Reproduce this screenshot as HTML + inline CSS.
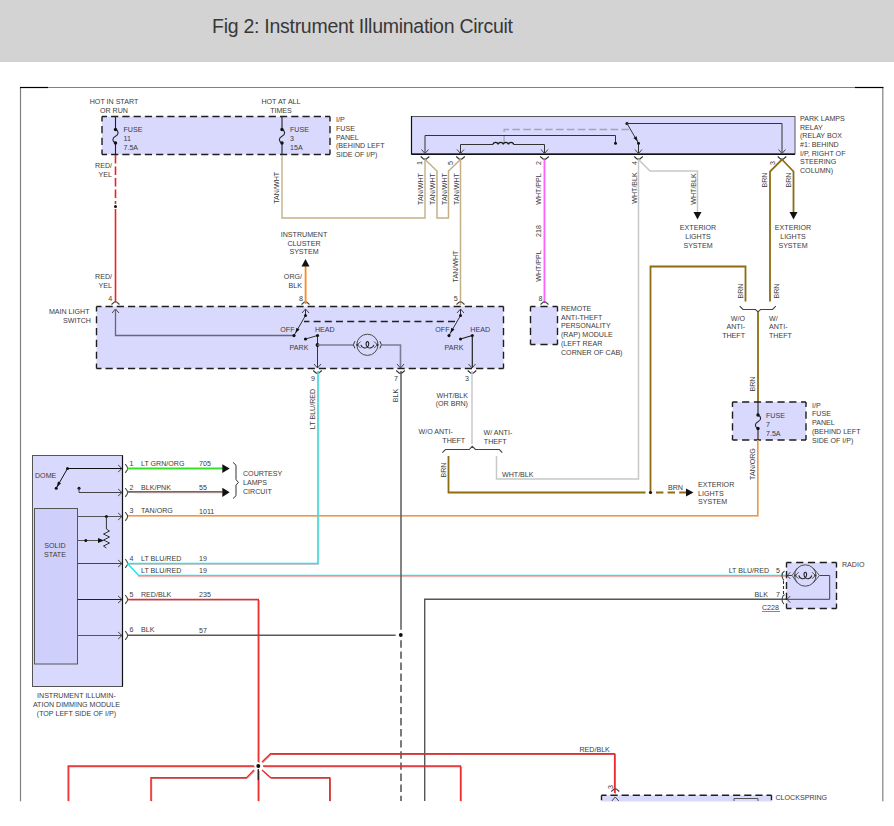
<!DOCTYPE html>
<html><head><meta charset="utf-8"><style>
html,body{margin:0;padding:0;background:#fff;}
body{width:894px;height:826px;overflow:hidden;position:relative;font-family:"Liberation Sans",sans-serif;}
.hdr{position:absolute;left:0;top:0;width:894px;height:62px;background:#d3d3d3;}
.title{position:absolute;left:212px;top:15px;font-size:19.5px;letter-spacing:-0.27px;line-height:22px;color:#383838;white-space:nowrap;}
svg{position:absolute;left:0;top:0;}
svg text{font-family:"Liberation Sans",sans-serif;}
</style></head><body>
<div class="hdr"></div><div class="title">Fig 2: Instrument Illumination Circuit</div>
<svg width="894" height="826" viewBox="0 0 894 826">
<path d="M20.5,801.5 V87.5 H882.8 V801.5" stroke="#808080" stroke-width="1.2" fill="none"/>
<path d="M20,87.5 H48" stroke="#000" stroke-width="1.2" fill="none"/>
<path d="M855,87.5 H883.4" stroke="#000" stroke-width="1.2" fill="none"/>
<rect x="102" y="116.5" width="228" height="38" fill="#d9d9fe"/>
<path d="M102.00,116.50 L107.00,116.50 M111.06,116.50 L118.26,116.50 M122.32,116.50 L129.52,116.50 M133.58,116.50 L140.78,116.50 M144.84,116.50 L152.04,116.50 M156.10,116.50 L163.30,116.50 M167.36,116.50 L174.56,116.50 M178.62,116.50 L185.82,116.50 M189.88,116.50 L197.08,116.50 M201.14,116.50 L208.34,116.50 M212.40,116.50 L219.60,116.50 M223.66,116.50 L230.86,116.50 M234.92,116.50 L242.12,116.50 M246.18,116.50 L253.38,116.50 M257.44,116.50 L264.64,116.50 M268.70,116.50 L275.90,116.50 M279.96,116.50 L287.16,116.50 M291.22,116.50 L298.42,116.50 M302.48,116.50 L309.68,116.50 M313.74,116.50 L320.94,116.50 M325.00,116.50 L330.00,116.50 M330.00,116.50 L330.00,121.50 M330.00,126.03 L330.00,133.23 M330.00,137.77 L330.00,144.97 M330.00,149.50 L330.00,154.50 M102.00,154.50 L107.00,154.50 M111.06,154.50 L118.26,154.50 M122.32,154.50 L129.52,154.50 M133.58,154.50 L140.78,154.50 M144.84,154.50 L152.04,154.50 M156.10,154.50 L163.30,154.50 M167.36,154.50 L174.56,154.50 M178.62,154.50 L185.82,154.50 M189.88,154.50 L197.08,154.50 M201.14,154.50 L208.34,154.50 M212.40,154.50 L219.60,154.50 M223.66,154.50 L230.86,154.50 M234.92,154.50 L242.12,154.50 M246.18,154.50 L253.38,154.50 M257.44,154.50 L264.64,154.50 M268.70,154.50 L275.90,154.50 M279.96,154.50 L287.16,154.50 M291.22,154.50 L298.42,154.50 M302.48,154.50 L309.68,154.50 M313.74,154.50 L320.94,154.50 M325.00,154.50 L330.00,154.50 M102.00,116.50 L102.00,121.50 M102.00,126.03 L102.00,133.23 M102.00,137.77 L102.00,144.97 M102.00,149.50 L102.00,154.50" stroke="#1e1e1e" stroke-width="1.4" fill="none" stroke-linecap="butt"/>
<path d="M115.5,116.5 V129.5 C119.0,131.0 119.0,134.5 115.5,136.25 C112.0,138.0 112.0,141.5 115.5,143.0 V154.5" stroke="#222" stroke-width="1.1" fill="none"/>
<circle cx="115.5" cy="129.5" r="1.7" fill="#111"/>
<circle cx="115.5" cy="143.0" r="1.7" fill="#111"/>
<path d="M282,116.5 V129.5 C285.5,131.0 285.5,134.5 282,136.25 C278.5,138.0 278.5,141.5 282,143.0 V154.5" stroke="#222" stroke-width="1.1" fill="none"/>
<circle cx="282" cy="129.5" r="1.7" fill="#111"/>
<circle cx="282" cy="143.0" r="1.7" fill="#111"/>
<text x="123.5" y="132.1" font-size="7.1" fill="#3c3c3c">FUSE</text>
<text x="123.5" y="141.1" font-size="7.1" fill="#3c3c3c">11</text>
<text x="123.5" y="150.1" font-size="7.1" fill="#3c3c3c">7.5A</text>
<text x="290" y="132.1" font-size="7.1" fill="#3c3c3c">FUSE</text>
<text x="290" y="141.1" font-size="7.1" fill="#3c3c3c">3</text>
<text x="290" y="150.1" font-size="7.1" fill="#3c3c3c">15A</text>
<text x="114" y="103.8" text-anchor="middle" font-size="7.1" fill="#3c3c3c">HOT IN START</text>
<text x="114" y="112.6" text-anchor="middle" font-size="7.1" fill="#3c3c3c">OR RUN</text>
<text x="281" y="103.8" text-anchor="middle" font-size="7.1" fill="#3c3c3c">HOT AT ALL</text>
<text x="281" y="112.6" text-anchor="middle" font-size="7.1" fill="#3c3c3c">TIMES</text>
<text x="336" y="122.1" font-size="7.1" fill="#3c3c3c">I/P</text>
<text x="336" y="130.8" font-size="7.1" fill="#3c3c3c">FUSE</text>
<text x="336" y="139.5" font-size="7.1" fill="#3c3c3c">PANEL</text>
<text x="336" y="148.2" font-size="7.1" fill="#3c3c3c">(BEHIND LEFT</text>
<text x="336" y="156.9" font-size="7.1" fill="#3c3c3c">SIDE OF I/P)</text>
<path d="M115.5,155 V204" stroke="#f02020" stroke-width="1.6" fill="none" stroke-dasharray="8.5,3"/>
<path d="M115.5,209 V302" stroke="#f02020" stroke-width="1.6" fill="none"/>
<circle cx="115.5" cy="206.5" r="1.5" fill="#111"/>
<text x="112" y="167.8" text-anchor="end" font-size="7.1" fill="#3c3c3c">RED/</text>
<text x="112" y="176.8" text-anchor="end" font-size="7.1" fill="#3c3c3c">YEL</text>
<text x="112" y="279.1" text-anchor="end" font-size="7.1" fill="#3c3c3c">RED/</text>
<text x="112" y="288.2" text-anchor="end" font-size="7.1" fill="#3c3c3c">YEL</text>
<rect x="411.5" y="116.5" width="383.5" height="37.5" fill="#d9d9fe" stroke="#555" stroke-width="1"/>
<path d="M411.5,154.2 H795" stroke="#111" stroke-width="1.5" fill="none"/>
<path d="M411.5,116 V154.5" stroke="#111" stroke-width="1.2" fill="none"/>
<path d="M504.1,143 V129.5 H631" stroke="#a4a4b4" stroke-width="1.3" fill="none" stroke-dasharray="7.5,3.4"/>
<path d="M425,153 V135.5 H615.5 V143.2" stroke="#333" stroke-width="1" fill="none"/>
<circle cx="615.5" cy="143.2" r="1.5" fill="#111"/>
<path d="M460.5,153 V144.5 H493" stroke="#333" stroke-width="1" fill="none"/>
<path d="M513.6,144.5 H544.5 V153" stroke="#333" stroke-width="1" fill="none"/>
<path d="M493,144.5 a2.6,2.4 0 0 1 5.15,0 a2.6,2.4 0 0 1 5.15,0 a2.6,2.4 0 0 1 5.15,0 a2.6,2.4 0 0 1 5.15,0" stroke="#1a1a1a" stroke-width="1.3" fill="none"/>
<circle cx="627" cy="123.5" r="1.6" fill="#111"/>
<path d="M627,123.5 H782 V153" stroke="#333" stroke-width="1" fill="none"/>
<path d="M627,123.5 L638.5,143.2 V153" stroke="#333" stroke-width="1" fill="none"/>
<path d="M637.6,141.2 L636.6,136.3 L633.4,138.1 Z" fill="#111"/>
<circle cx="638.5" cy="143.2" r="1.5" fill="#111"/>
<path d="M421.5,149.5 L425,153.5 L428.5,149.5" stroke="#444" stroke-width="1" fill="none"/>
<path d="M420.7,156.5 L423.8,159.1 H426.2 L429.3,156.5" stroke="#333" stroke-width="1.2" fill="none"/>
<path d="M457.0,149.5 L460.5,153.5 L464.0,149.5" stroke="#444" stroke-width="1" fill="none"/>
<path d="M456.2,156.5 L459.3,159.1 H461.7 L464.8,156.5" stroke="#333" stroke-width="1.2" fill="none"/>
<path d="M541.0,149.5 L544.5,153.5 L548.0,149.5" stroke="#444" stroke-width="1" fill="none"/>
<path d="M540.2,156.5 L543.3,159.1 H545.7 L548.8,156.5" stroke="#333" stroke-width="1.2" fill="none"/>
<path d="M635.0,149.5 L638.5,153.5 L642.0,149.5" stroke="#444" stroke-width="1" fill="none"/>
<path d="M634.2,156.5 L637.3,159.1 H639.7 L642.8,156.5" stroke="#333" stroke-width="1.2" fill="none"/>
<path d="M778.5,149.5 L782,153.5 L785.5,149.5" stroke="#444" stroke-width="1" fill="none"/>
<path d="M777.7,156.5 L780.8,159.1 H783.2 L786.3,156.5" stroke="#333" stroke-width="1.2" fill="none"/>
<text x="422.0" y="163" text-anchor="middle" transform="rotate(-90 422.0 163)" font-size="7.1" fill="#3c3c3c">1</text>
<text x="452.5" y="163" text-anchor="middle" transform="rotate(-90 452.5 163)" font-size="7.1" fill="#3c3c3c">5</text>
<text x="541.0" y="163" text-anchor="middle" transform="rotate(-90 541.0 163)" font-size="7.1" fill="#3c3c3c">2</text>
<text x="636.5" y="163" text-anchor="middle" transform="rotate(-90 636.5 163)" font-size="7.1" fill="#3c3c3c">4</text>
<text x="774.5" y="163" text-anchor="middle" transform="rotate(-90 774.5 163)" font-size="7.1" fill="#3c3c3c">3</text>
<text x="800" y="121.2" font-size="7.1" fill="#3c3c3c">PARK LAMPS</text>
<text x="800" y="129.8" font-size="7.1" fill="#3c3c3c">RELAY</text>
<text x="800" y="138.4" font-size="7.1" fill="#3c3c3c">(RELAY BOX</text>
<text x="800" y="147.0" font-size="7.1" fill="#3c3c3c">#1: BEHIND</text>
<text x="800" y="155.6" font-size="7.1" fill="#3c3c3c">I/P, RIGHT OF</text>
<text x="800" y="164.2" font-size="7.1" fill="#3c3c3c">STEERING</text>
<text x="800" y="172.8" font-size="7.1" fill="#3c3c3c">COLUMN)</text>
<path d="M282,155 V218 H425 V159.5" stroke="#c2b086" stroke-width="1.4" fill="none"/>
<path d="M425,159.5 L437,171 V218 H448.5 V171 L460.5,159.5 V305" stroke="#c2b086" stroke-width="1.5" fill="none"/>
<text x="278.9" y="187.8" text-anchor="middle" transform="rotate(-90 278.9 187.8)" font-size="7.1" fill="#3c3c3c">TAN/WHT</text>
<text x="422.5" y="189" text-anchor="middle" transform="rotate(-90 422.5 189)" font-size="7.1" fill="#3c3c3c">TAN/WHT</text>
<text x="434.5" y="189" text-anchor="middle" transform="rotate(-90 434.5 189)" font-size="7.1" fill="#3c3c3c">TAN/WHT</text>
<text x="446.5" y="189" text-anchor="middle" transform="rotate(-90 446.5 189)" font-size="7.1" fill="#3c3c3c">TAN/WHT</text>
<text x="458.5" y="189" text-anchor="middle" transform="rotate(-90 458.5 189)" font-size="7.1" fill="#3c3c3c">TAN/WHT</text>
<text x="457.5" y="266.5" text-anchor="middle" transform="rotate(-90 457.5 266.5)" font-size="7.1" fill="#3c3c3c">TAN/WHT</text>
<path d="M543.7,159.5 V303" stroke="#c8b0d8" stroke-width="0.8" fill="none"/>
<path d="M544.7,159.5 V303" stroke="#ff5cff" stroke-width="1.3" fill="none"/>
<text x="541.0" y="189" text-anchor="middle" transform="rotate(-90 541.0 189)" font-size="7.1" fill="#3c3c3c">WHT/PPL</text>
<text x="541.0" y="231" text-anchor="middle" transform="rotate(-90 541.0 231)" font-size="7.1" fill="#3c3c3c">218</text>
<text x="541.0" y="266" text-anchor="middle" transform="rotate(-90 541.0 266)" font-size="7.1" fill="#3c3c3c">WHT/PPL</text>
<text x="538.5" y="300.5" font-size="7.1" fill="#3c3c3c">8</text>
<rect x="530.5" y="306.5" width="27" height="38" fill="#d9d9fe"/>
<path d="M530.50,306.50 L535.50,306.50 M540.40,306.50 L547.60,306.50 M552.50,306.50 L557.50,306.50 M557.50,306.50 L557.50,311.50 M557.50,316.03 L557.50,323.23 M557.50,327.77 L557.50,334.97 M557.50,339.50 L557.50,344.50 M530.50,344.50 L535.50,344.50 M540.40,344.50 L547.60,344.50 M552.50,344.50 L557.50,344.50 M530.50,306.50 L530.50,311.50 M530.50,316.03 L530.50,323.23 M530.50,327.77 L530.50,334.97 M530.50,339.50 L530.50,344.50" stroke="#1e1e1e" stroke-width="1.4" fill="none" stroke-linecap="butt"/>
<path d="M540.5,304.5 L543.3,302 H545.7 L548.5,304.5" stroke="#444" stroke-width="1.1" fill="none"/>
<text x="561" y="310.8" font-size="7.1" fill="#3c3c3c">REMOTE</text>
<text x="561" y="319.6" font-size="7.1" fill="#3c3c3c">ANTI-THEFT</text>
<text x="561" y="328.4" font-size="7.1" fill="#3c3c3c">PERSONALITY</text>
<text x="561" y="337.2" font-size="7.1" fill="#3c3c3c">(RAP) MODULE</text>
<text x="561" y="346.0" font-size="7.1" fill="#3c3c3c">(LEFT REAR</text>
<text x="561" y="354.8" font-size="7.1" fill="#3c3c3c">CORNER OF CAB)</text>
<path d="M638.5,159.5 V479 H496.5 V456" stroke="#c8c8c8" stroke-width="1.5" fill="none"/>
<path d="M638.5,159.5 L650,171 H697.5 V212" stroke="#c8c8c8" stroke-width="1.5" fill="none"/>
<path d="M693.5,212 L701.5,212 L697.5,219.5 Z" fill="#111"/>
<text x="636.5" y="188" text-anchor="middle" transform="rotate(-90 636.5 188)" font-size="7.1" fill="#3c3c3c">WHT/BLK</text>
<text x="695.5" y="189" text-anchor="middle" transform="rotate(-90 695.5 189)" font-size="7.1" fill="#3c3c3c">WHT/BLK</text>
<text x="698" y="230.0" text-anchor="middle" font-size="7.1" fill="#3c3c3c">EXTERIOR</text>
<text x="698" y="238.8" text-anchor="middle" font-size="7.1" fill="#3c3c3c">LIGHTS</text>
<text x="698" y="247.6" text-anchor="middle" font-size="7.1" fill="#3c3c3c">SYSTEM</text>
<path d="M782,159.5 L770,171.5 V301.5" stroke="#8f6c12" stroke-width="1.8" fill="none"/>
<path d="M782,159.5 L793.5,171.5 V212" stroke="#8f6c12" stroke-width="1.8" fill="none"/>
<path d="M789.5,212 L797.5,212 L793.5,219.5 Z" fill="#111"/>
<text x="766.5" y="180" text-anchor="middle" transform="rotate(-90 766.5 180)" font-size="7.1" fill="#3c3c3c">BRN</text>
<text x="790.5" y="180" text-anchor="middle" transform="rotate(-90 790.5 180)" font-size="7.1" fill="#3c3c3c">BRN</text>
<text x="793" y="230.0" text-anchor="middle" font-size="7.1" fill="#3c3c3c">EXTERIOR</text>
<text x="793" y="238.8" text-anchor="middle" font-size="7.1" fill="#3c3c3c">LIGHTS</text>
<text x="793" y="247.6" text-anchor="middle" font-size="7.1" fill="#3c3c3c">SYSTEM</text>
<rect x="96.5" y="306.5" width="407" height="62" fill="#d9d9fe"/>
<path d="M96.50,306.50 L101.50,306.50 M105.53,306.50 L112.73,306.50 M116.76,306.50 L123.96,306.50 M127.98,306.50 L135.18,306.50 M139.21,306.50 L146.41,306.50 M150.44,306.50 L157.64,306.50 M161.67,306.50 L168.87,306.50 M172.89,306.50 L180.09,306.50 M184.12,306.50 L191.32,306.50 M195.35,306.50 L202.55,306.50 M206.58,306.50 L213.78,306.50 M217.81,306.50 L225.01,306.50 M229.03,306.50 L236.23,306.50 M240.26,306.50 L247.46,306.50 M251.49,306.50 L258.69,306.50 M262.72,306.50 L269.92,306.50 M273.94,306.50 L281.14,306.50 M285.17,306.50 L292.37,306.50 M296.40,306.50 L303.60,306.50 M307.63,306.50 L314.83,306.50 M318.86,306.50 L326.06,306.50 M330.08,306.50 L337.28,306.50 M341.31,306.50 L348.51,306.50 M352.54,306.50 L359.74,306.50 M363.77,306.50 L370.97,306.50 M374.99,306.50 L382.19,306.50 M386.22,306.50 L393.42,306.50 M397.45,306.50 L404.65,306.50 M408.68,306.50 L415.88,306.50 M419.91,306.50 L427.11,306.50 M431.13,306.50 L438.33,306.50 M442.36,306.50 L449.56,306.50 M453.59,306.50 L460.79,306.50 M464.82,306.50 L472.02,306.50 M476.04,306.50 L483.24,306.50 M487.27,306.50 L494.47,306.50 M498.50,306.50 L503.50,306.50 M503.50,306.50 L503.50,311.50 M503.50,316.14 L503.50,323.34 M503.50,327.98 L503.50,335.18 M503.50,339.82 L503.50,347.02 M503.50,351.66 L503.50,358.86 M503.50,363.50 L503.50,368.50 M96.50,368.50 L101.50,368.50 M105.53,368.50 L112.73,368.50 M116.76,368.50 L123.96,368.50 M127.98,368.50 L135.18,368.50 M139.21,368.50 L146.41,368.50 M150.44,368.50 L157.64,368.50 M161.67,368.50 L168.87,368.50 M172.89,368.50 L180.09,368.50 M184.12,368.50 L191.32,368.50 M195.35,368.50 L202.55,368.50 M206.58,368.50 L213.78,368.50 M217.81,368.50 L225.01,368.50 M229.03,368.50 L236.23,368.50 M240.26,368.50 L247.46,368.50 M251.49,368.50 L258.69,368.50 M262.72,368.50 L269.92,368.50 M273.94,368.50 L281.14,368.50 M285.17,368.50 L292.37,368.50 M296.40,368.50 L303.60,368.50 M307.63,368.50 L314.83,368.50 M318.86,368.50 L326.06,368.50 M330.08,368.50 L337.28,368.50 M341.31,368.50 L348.51,368.50 M352.54,368.50 L359.74,368.50 M363.77,368.50 L370.97,368.50 M374.99,368.50 L382.19,368.50 M386.22,368.50 L393.42,368.50 M397.45,368.50 L404.65,368.50 M408.68,368.50 L415.88,368.50 M419.91,368.50 L427.11,368.50 M431.13,368.50 L438.33,368.50 M442.36,368.50 L449.56,368.50 M453.59,368.50 L460.79,368.50 M464.82,368.50 L472.02,368.50 M476.04,368.50 L483.24,368.50 M487.27,368.50 L494.47,368.50 M498.50,368.50 L503.50,368.50 M96.50,306.50 L96.50,311.50 M96.50,316.14 L96.50,323.34 M96.50,327.98 L96.50,335.18 M96.50,339.82 L96.50,347.02 M96.50,351.66 L96.50,358.86 M96.50,363.50 L96.50,368.50" stroke="#1e1e1e" stroke-width="1.4" fill="none" stroke-linecap="butt"/>
<text x="89.5" y="314" text-anchor="end" font-size="7.1" fill="#3c3c3c">MAIN LIGHT</text>
<text x="91" y="322.8" text-anchor="end" font-size="7.1" fill="#3c3c3c">SWITCH</text>
<text x="108.3" y="301" font-size="7.1" fill="#3c3c3c">4</text>
<path d="M112.0,313 L115.5,309 L119.0,313" stroke="#444" stroke-width="1" fill="none"/>
<path d="M111.5,304.5 L114.3,302 H116.7 L119.5,304.5" stroke="#444" stroke-width="1.1" fill="none"/>
<path d="M115.5,309 V335.5 H294" stroke="#666678" stroke-width="1.3" fill="none"/>
<path d="M305.5,309 V315.5 L294,335.5" stroke="#333" stroke-width="1" fill="none"/>
<circle cx="305.5" cy="315.5" r="1.5" fill="#111"/>
<circle cx="294" cy="335.6" r="1.6" fill="#111"/>
<path d="M302.0,313 L305.5,309 L309.0,313" stroke="#444" stroke-width="1" fill="none"/>
<path d="M301.5,304.5 L304.3,302 H306.7 L309.5,304.5" stroke="#444" stroke-width="1.1" fill="none"/>
<path d="M305.5,339 L317.5,335.5 V368" stroke="#333" stroke-width="1" fill="none"/>
<path d="M295.5,333 L299.6,329.6 L296.4,327.8 Z" fill="#111"/>
<circle cx="305.5" cy="339" r="1.6" fill="#111"/>
<circle cx="317.5" cy="335.5" r="1.6" fill="#111"/>
<circle cx="317.5" cy="345" r="1.9" fill="#111"/>
<path d="M317.5,345 H353" stroke="#7c7c94" stroke-width="1.6" fill="none"/>
<path d="M382,345 H400.5 V368" stroke="#7c7c94" stroke-width="1.6" fill="none"/>
<circle cx="367.4" cy="344.8" r="10.6" fill="none" stroke="#4a4a4a" stroke-width="1"/>
<path d="M354.9,341.2 Q351.9,344.8 354.9,348.40000000000003 M379.9,341.2 Q382.9,344.8 379.9,348.40000000000003" stroke="#333" stroke-width="1" fill="none"/>
<path d="M360.7,341.5 L357.4,344.8 L360.7,348.1 M374.09999999999997,341.5 L377.4,344.8 L374.09999999999997,348.1" stroke="#555" stroke-width="1" fill="none"/>
<circle cx="357.4" cy="344.8" r="1.1" fill="#333"/>
<circle cx="377.4" cy="344.8" r="1.1" fill="#333"/>
<path d="M360.9,344.8 C361.9,348.40000000000003 365.4,348.40000000000003 367.09999999999997,347.40000000000003 C369.29999999999995,345.8 369.09999999999997,341.6 367.4,341.6 C365.7,341.6 365.5,345.8 367.7,347.40000000000003 C369.4,348.40000000000003 372.9,348.40000000000003 373.9,344.8" stroke="#222" stroke-width="1.1" fill="none"/>
<path d="M455,321.5 H304" stroke="#222" stroke-width="1.4" fill="none" stroke-dasharray="7,4.2"/>
<text x="280.3" y="331.5" font-size="7.1" fill="#3c3c3c">OFF</text>
<text x="315" y="331.5" font-size="7.1" fill="#3c3c3c">HEAD</text>
<text x="289.6" y="349.5" font-size="7.1" fill="#3c3c3c">PARK</text>
<path d="M460.5,309 V315.5 L449,335.5" stroke="#333" stroke-width="1" fill="none"/>
<circle cx="460.5" cy="315.5" r="1.5" fill="#111"/>
<circle cx="449" cy="335.6" r="1.6" fill="#111"/>
<path d="M457.0,313 L460.5,309 L464.0,313" stroke="#444" stroke-width="1" fill="none"/>
<path d="M456.5,304.5 L459.3,302 H461.7 L464.5,304.5" stroke="#444" stroke-width="1.1" fill="none"/>
<path d="M460.5,339 L472.3,335.5 V368" stroke="#222" stroke-width="1.2" fill="none"/>
<path d="M450.4,333 L454.5,329.6 L451.3,327.8 Z" fill="#111"/>
<circle cx="460.5" cy="339" r="1.5" fill="#111"/>
<circle cx="472.3" cy="335.5" r="1.5" fill="#111"/>
<text x="435.3" y="331.5" font-size="7.1" fill="#3c3c3c">OFF</text>
<text x="470.3" y="331.5" font-size="7.1" fill="#3c3c3c">HEAD</text>
<text x="444.6" y="349.5" font-size="7.1" fill="#3c3c3c">PARK</text>
<path d="M314.0,364 L317.5,368 L321.0,364" stroke="#444" stroke-width="1" fill="none"/>
<path d="M313.2,370.5 L316.3,373.1 H318.7 L321.8,370.5" stroke="#333" stroke-width="1.2" fill="none"/>
<path d="M397.0,364 L400.5,368 L404.0,364" stroke="#444" stroke-width="1" fill="none"/>
<path d="M396.2,370.5 L399.3,373.1 H401.7 L404.8,370.5" stroke="#333" stroke-width="1.2" fill="none"/>
<path d="M468.5,364 L472,368 L475.5,364" stroke="#444" stroke-width="1" fill="none"/>
<path d="M467.7,370.5 L470.8,373.1 H473.2 L476.3,370.5" stroke="#333" stroke-width="1.2" fill="none"/>
<text x="311" y="381" font-size="7.1" fill="#3c3c3c">9</text>
<text x="394" y="380.5" font-size="7.1" fill="#3c3c3c">7</text>
<text x="465" y="380.5" font-size="7.1" fill="#3c3c3c">3</text>
<text x="398.0" y="395.5" text-anchor="middle" transform="rotate(-90 398.0 395.5)" font-size="7.1" fill="#3c3c3c">BLK</text>
<text x="315.0" y="409" text-anchor="middle" transform="rotate(-90 315.0 409)" font-size="7.1" fill="#3c3c3c">LT BLU/RED</text>
<text x="299" y="300.5" font-size="7.1" fill="#3c3c3c">8</text>
<text x="453.8" y="300.5" font-size="7.1" fill="#3c3c3c">5</text>
<path d="M305.6,266 V304" stroke="#ff8a14" stroke-width="1.8" fill="none"/>
<path d="M301.5,266.5 L309.5,266.5 L305.5,259 Z" fill="#111"/>
<text x="304" y="237.0" text-anchor="middle" font-size="7.1" fill="#3c3c3c">INSTRUMENT</text>
<text x="304" y="245.5" text-anchor="middle" font-size="7.1" fill="#3c3c3c">CLUSTER</text>
<text x="304" y="254.0" text-anchor="middle" font-size="7.1" fill="#3c3c3c">SYSTEM</text>
<text x="302" y="279.0" text-anchor="end" font-size="7.1" fill="#3c3c3c">ORG/</text>
<text x="302" y="288.0" text-anchor="end" font-size="7.1" fill="#3c3c3c">BLK</text>
<path d="M472,371 V444.2" stroke="#c8c8c8" stroke-width="1.5" fill="none"/>
<text x="468" y="397.8" text-anchor="end" font-size="7.1" fill="#3c3c3c">WHT/BLK</text>
<text x="468" y="406.4" text-anchor="end" font-size="7.1" fill="#3c3c3c">(OR BRN)</text>
<text x="418.5" y="434" font-size="7.1" fill="#3c3c3c">W/O ANTI-</text>
<text x="442.3" y="442.8" font-size="7.1" fill="#3c3c3c">THEFT</text>
<text x="483.5" y="434.5" font-size="7.1" fill="#3c3c3c">W/ ANTI-</text>
<text x="483.8" y="443.5" font-size="7.1" fill="#3c3c3c">THEFT</text>
<path d="M442.3,452.6 L445.5,449.5 H469.3 L472.2,446.3 L475.5,449.5 H499.4 L502.3,452.6" stroke="#444" stroke-width="1.1" fill="none"/>
<path d="M448.5,456 V492.5 H645.5" stroke="#8f6c12" stroke-width="1.8" fill="none"/>
<text x="445.5" y="470" text-anchor="middle" transform="rotate(-90 445.5 470)" font-size="7.1" fill="#3c3c3c">BRN</text>
<text x="502" y="476.5" font-size="7.1" fill="#3c3c3c">WHT/BLK</text>
<path d="M650.5,492.5 V266.5 H745.5 V301.5" stroke="#8f6c12" stroke-width="1.8" fill="none"/>
<text x="743.0" y="291" text-anchor="middle" transform="rotate(-90 743.0 291)" font-size="7.1" fill="#3c3c3c">BRN</text>
<text x="779.0" y="291" text-anchor="middle" transform="rotate(-90 779.0 291)" font-size="7.1" fill="#3c3c3c">BRN</text>
<path d="M739.7,306.1 L743,309.5 H755.5 L758,311.8 L760.5,309.5 H772.5 L775.8,306.1" stroke="#444" stroke-width="1.1" fill="none"/>
<path d="M758,312.1 V402" stroke="#8f6c12" stroke-width="1.8" fill="none"/>
<text x="745" y="320.5" text-anchor="end" font-size="7.1" fill="#3c3c3c">W/O</text>
<text x="745" y="329.0" text-anchor="end" font-size="7.1" fill="#3c3c3c">ANTI-</text>
<text x="745" y="337.5" text-anchor="end" font-size="7.1" fill="#3c3c3c">THEFT</text>
<text x="769" y="320.5" font-size="7.1" fill="#3c3c3c">W/</text>
<text x="769" y="329.0" font-size="7.1" fill="#3c3c3c">ANTI-</text>
<text x="769" y="337.5" font-size="7.1" fill="#3c3c3c">THEFT</text>
<text x="754.5" y="384" text-anchor="middle" transform="rotate(-90 754.5 384)" font-size="7.1" fill="#3c3c3c">BRN</text>
<rect x="732.5" y="402" width="73.5" height="38" fill="#d9d9fe"/>
<path d="M732.50,402.00 L737.50,402.00 M742.08,402.00 L749.28,402.00 M753.87,402.00 L761.07,402.00 M765.65,402.00 L772.85,402.00 M777.43,402.00 L784.63,402.00 M789.22,402.00 L796.42,402.00 M801.00,402.00 L806.00,402.00 M806.00,402.00 L806.00,407.00 M806.00,411.53 L806.00,418.73 M806.00,423.27 L806.00,430.47 M806.00,435.00 L806.00,440.00 M732.50,440.00 L737.50,440.00 M742.08,440.00 L749.28,440.00 M753.87,440.00 L761.07,440.00 M765.65,440.00 L772.85,440.00 M777.43,440.00 L784.63,440.00 M789.22,440.00 L796.42,440.00 M801.00,440.00 L806.00,440.00 M732.50,402.00 L732.50,407.00 M732.50,411.53 L732.50,418.73 M732.50,423.27 L732.50,430.47 M732.50,435.00 L732.50,440.00" stroke="#1e1e1e" stroke-width="1.4" fill="none" stroke-linecap="butt"/>
<path d="M758,402 V415 C761.5,416.5 761.5,420 758,421.75 C754.5,423.5 754.5,427.0 758,428.5 V440" stroke="#222" stroke-width="1.1" fill="none"/>
<circle cx="758" cy="415" r="1.7" fill="#111"/>
<circle cx="758" cy="428.5" r="1.7" fill="#111"/>
<text x="766" y="417.5" font-size="7.1" fill="#3c3c3c">FUSE</text>
<text x="766" y="426.5" font-size="7.1" fill="#3c3c3c">7</text>
<text x="766" y="435.5" font-size="7.1" fill="#3c3c3c">7.5A</text>
<text x="812" y="407.5" font-size="7.1" fill="#3c3c3c">I/P</text>
<text x="812" y="416.3" font-size="7.1" fill="#3c3c3c">FUSE</text>
<text x="812" y="425.1" font-size="7.1" fill="#3c3c3c">PANEL</text>
<text x="812" y="433.9" font-size="7.1" fill="#3c3c3c">(BEHIND LEFT</text>
<text x="812" y="442.7" font-size="7.1" fill="#3c3c3c">SIDE OF I/P)</text>
<circle cx="650.5" cy="492.5" r="1.6" fill="#111"/>
<path d="M656,492.5 H686.5" stroke="#8f6c12" stroke-width="1.8" fill="none" stroke-dasharray="7.4,4.2"/>
<path d="M686,488.5 L693.5,492.5 L686,496.5 Z" fill="#111"/>
<text x="668" y="489.5" font-size="7.1" fill="#3c3c3c">BRN</text>
<text x="698" y="487.0" font-size="7.1" fill="#3c3c3c">EXTERIOR</text>
<text x="698" y="495.6" font-size="7.1" fill="#3c3c3c">LIGHTS</text>
<text x="698" y="504.2" font-size="7.1" fill="#3c3c3c">SYSTEM</text>
<path d="M758,440 V516 H127.5" stroke="#f0ae6c" stroke-width="1.6" fill="none"/>
<path d="M757.5,440 V515.5 H127.5" stroke="#c2a575" stroke-width="1" fill="none"/>
<text x="754.5" y="464" text-anchor="middle" transform="rotate(-90 754.5 464)" font-size="7.1" fill="#3c3c3c">TAN/ORG</text>
<rect x="32.5" y="455.5" width="90" height="231" fill="#d9d9fe" stroke="#555" stroke-width="1"/>
<rect x="34.5" y="508.5" width="43" height="155.5" fill="#cfcffc" stroke="#555" stroke-width="1"/>
<path d="M122.5,455.5 V686.5" stroke="#111" stroke-width="1.2" fill="none"/>
<text x="55" y="548.0" text-anchor="middle" font-size="7.1" fill="#3c3c3c">SOLID</text>
<text x="55" y="557.0" text-anchor="middle" font-size="7.1" fill="#3c3c3c">STATE</text>
<text x="35" y="477.8" font-size="7.1" fill="#3c3c3c">DOME</text>
<path d="M67.5,468.5 H122" stroke="#111" stroke-width="1" fill="none"/>
<path d="M67.5,468.5 L56.2,488.3" stroke="#111" stroke-width="1" fill="none"/>
<path d="M58,481.5 L56.6,487.5 L61,483.2 Z" fill="#111"/>
<circle cx="67.5" cy="468.5" r="1.5" fill="#111"/>
<circle cx="56.2" cy="488.3" r="1.5" fill="#111"/>
<circle cx="79" cy="488.3" r="1.5" fill="#111"/>
<path d="M79,488.3 V492.5 H122" stroke="#444" stroke-width="1" fill="none"/>
<path d="M77.5,516.5 H122" stroke="#555" stroke-width="1" fill="none"/>
<circle cx="106.4" cy="516.5" r="1.5" fill="#111"/>
<path d="M106.4,516.5 V529 L109.5,531 L103.5,534 L109.5,537 L103.5,540 L109.5,543 L103.5,546 L106.4,548" stroke="#333" stroke-width="1" fill="none"/>
<path d="M77.5,540.5 H102" stroke="#555" stroke-width="1" fill="none"/>
<path d="M98,538 L104,540.5 L98,543 Z" fill="#111"/>
<circle cx="85.8" cy="540.5" r="1.5" fill="#111"/>
<path d="M77.5,563.5 H122" stroke="#444" stroke-width="1" fill="none"/>
<path d="M77.5,599.5 H122" stroke="#222" stroke-width="1" fill="none"/>
<path d="M77.5,635.5 H122" stroke="#555" stroke-width="1" fill="none"/>
<path d="M118.1,465.0 L122,468.5 L118.1,472.0" stroke="#444" stroke-width="1" fill="none"/>
<path d="M125.2,464.2 Q128,467.5 127.5,468.5 Q128,469.5 125.2,472.8" stroke="#444" stroke-width="1.1" fill="none"/>
<path d="M118.1,489.0 L122,492.5 L118.1,496.0" stroke="#444" stroke-width="1" fill="none"/>
<path d="M125.2,488.2 Q128,491.5 127.5,492.5 Q128,493.5 125.2,496.8" stroke="#444" stroke-width="1.1" fill="none"/>
<path d="M118.1,513.0 L122,516.5 L118.1,520.0" stroke="#444" stroke-width="1" fill="none"/>
<path d="M125.2,512.2 Q128,515.5 127.5,516.5 Q128,517.5 125.2,520.8" stroke="#444" stroke-width="1.1" fill="none"/>
<path d="M118.1,560.0 L122,563.5 L118.1,567.0" stroke="#444" stroke-width="1" fill="none"/>
<path d="M125.2,559.2 Q128,562.5 127.5,563.5 Q128,564.5 125.2,567.8" stroke="#444" stroke-width="1.1" fill="none"/>
<path d="M118.1,596.0 L122,599.5 L118.1,603.0" stroke="#444" stroke-width="1" fill="none"/>
<path d="M125.2,595.2 Q128,598.5 127.5,599.5 Q128,600.5 125.2,603.8" stroke="#444" stroke-width="1.1" fill="none"/>
<path d="M118.1,632.0 L122,635.5 L118.1,639.0" stroke="#444" stroke-width="1" fill="none"/>
<path d="M125.2,631.2 Q128,634.5 127.5,635.5 Q128,636.5 125.2,639.8" stroke="#444" stroke-width="1.1" fill="none"/>
<text x="76.4" y="698.0" text-anchor="middle" font-size="7.1" fill="#3c3c3c">INSTRUMENT ILLUMIN-</text>
<text x="76.4" y="707.0" text-anchor="middle" font-size="7.1" fill="#3c3c3c">ATION DIMMING MODULE</text>
<text x="76.4" y="716.0" text-anchor="middle" font-size="7.1" fill="#3c3c3c">(TOP LEFT SIDE OF I/P)</text>
<path d="M127.5,469.4 H222.5" stroke="#f4b070" stroke-width="0.8" fill="none"/>
<path d="M127.5,468.3 H222.5" stroke="#35e02a" stroke-width="1.6" fill="none"/>
<path d="M222.3,464.2 L229.7,468.5 L222.3,472.9 Z" fill="#111"/>
<path d="M127.5,491.9 H222.5" stroke="#6a6a6a" stroke-width="1.6" fill="none"/>
<path d="M135,492.8 H222.5" stroke="#c09090" stroke-width="0.7" fill="none"/>
<path d="M222.3,487.8 L229.7,492.3 L222.3,496.9 Z" fill="#111"/>
<path d="M233,462.4 L236,465.2 V479.6 L238.4,482.4 L236,485.2 V495.7 L233,498.5" stroke="#333" stroke-width="1" fill="none"/>
<text x="243" y="476.0" font-size="7.1" fill="#3c3c3c">COURTESY</text>
<text x="243" y="485.0" font-size="7.1" fill="#3c3c3c">LAMPS</text>
<text x="243" y="494.0" font-size="7.1" fill="#3c3c3c">CIRCUIT</text>
<text x="129.6" y="465.9" font-size="7.1" fill="#3c3c3c">1</text>
<text x="141" y="465.9" font-size="7.1" fill="#3c3c3c">LT GRN/ORG</text>
<text x="199" y="465.9" font-size="7.1" fill="#3c3c3c">705</text>
<text x="129.6" y="489.5" font-size="7.1" fill="#3c3c3c">2</text>
<text x="141" y="489.5" font-size="7.1" fill="#3c3c3c">BLK/PNK</text>
<text x="199" y="489.5" font-size="7.1" fill="#3c3c3c">55</text>
<text x="129.6" y="512.6" font-size="7.1" fill="#3c3c3c">3</text>
<text x="141" y="512.6" font-size="7.1" fill="#3c3c3c">TAN/ORG</text>
<text x="199" y="513.5" font-size="7.1" fill="#3c3c3c">1011</text>
<text x="129.6" y="561.0" font-size="7.1" fill="#3c3c3c">4</text>
<text x="141" y="561.0" font-size="7.1" fill="#3c3c3c">LT BLU/RED</text>
<text x="199" y="561.0" font-size="7.1" fill="#3c3c3c">19</text>
<text x="129.6" y="596.8" font-size="7.1" fill="#3c3c3c">5</text>
<text x="141" y="596.8" font-size="7.1" fill="#3c3c3c">RED/BLK</text>
<text x="199" y="596.8" font-size="7.1" fill="#3c3c3c">235</text>
<text x="129.6" y="631.6" font-size="7.1" fill="#3c3c3c">6</text>
<text x="141" y="631.6" font-size="7.1" fill="#3c3c3c">BLK</text>
<text x="199" y="632.5" font-size="7.1" fill="#3c3c3c">57</text>
<text x="141" y="573" font-size="7.1" fill="#3c3c3c">LT BLU/RED</text>
<text x="199" y="573" font-size="7.1" fill="#3c3c3c">19</text>
<path d="M127.5,564.3 H318.7 V371" stroke="#ffa0a0" stroke-width="0.9" fill="none"/>
<path d="M127.5,563.5 H317.9 V371" stroke="#12eef2" stroke-width="1.5" fill="none"/>
<path d="M127.5,563.5 L138.8,575.6 H786" stroke="#12eef2" stroke-width="1.5" fill="none"/>
<path d="M138,576.6 H786" stroke="#ffa0a0" stroke-width="0.9" fill="none"/>
<g transform="translate(0.75,0.75)" stroke="#c05050" stroke-width="0.9" fill="none"><path d="M127.5,599.3 H258.3 V762"/><path d="M68.2,801 V766 H254"/><path d="M263,766 H460.5 V801"/><path d="M262,762 L270.5,753.7 H614.6 V793"/><path d="M262,770 L270.5,777.6 H329.7 V801"/><path d="M254,770 L246.5,777.6 H150.9 V801"/><path d="M258.3,770 V801"/></g>
<path d="M127.5,599.3 H258.3 V762" stroke="#f02a2a" stroke-width="1.35" fill="none"/>
<path d="M127.5,635.3 H395.6" stroke="#5a5a5a" stroke-width="1.4" fill="none"/>
<circle cx="400.8" cy="635" r="1.9" fill="#111"/>
<path d="M401,371 V629.7" stroke="#5a5a5a" stroke-width="1.5" fill="none"/>
<path d="M401,640.3 V801" stroke="#5a5a5a" stroke-width="1.6" fill="none" stroke-dasharray="7.4,3.7"/>
<path d="M424.7,801 V599.3 H786" stroke="#555" stroke-width="1.4" fill="none"/>
<path d="M68.2,801 V766 H254" stroke="#f02a2a" stroke-width="1.35" fill="none"/>
<path d="M263,766 H460.5 V801" stroke="#f02a2a" stroke-width="1.35" fill="none"/>
<path d="M262,762 L270.5,753.7 H614.6 V793" stroke="#f02a2a" stroke-width="1.35" fill="none"/>
<path d="M262,770 L270.5,777.6 H329.7 V801" stroke="#f02a2a" stroke-width="1.35" fill="none"/>
<path d="M254,770 L246.5,777.6 H150.9 V801" stroke="#f02a2a" stroke-width="1.35" fill="none"/>
<path d="M258.3,770 V801" stroke="#f02a2a" stroke-width="1.35" fill="none"/>
<path d="M258.3,769 V780" stroke="#222" stroke-width="1.2" fill="none"/>
<circle cx="258.3" cy="766" r="2" fill="#111"/>
<text x="579.5" y="752.2" font-size="7.1" fill="#3c3c3c">RED/BLK</text>
<rect x="601.5" y="795.3" width="170" height="40" fill="#d9d9fe"/>
<path d="M601.50,795.30 L606.50,795.30 M610.45,795.30 L617.65,795.30 M621.59,795.30 L628.79,795.30 M632.74,795.30 L639.94,795.30 M643.89,795.30 L651.09,795.30 M655.03,795.30 L662.23,795.30 M666.18,795.30 L673.38,795.30 M677.33,795.30 L684.53,795.30 M688.47,795.30 L695.67,795.30 M699.62,795.30 L706.82,795.30 M710.77,795.30 L717.97,795.30 M721.91,795.30 L729.11,795.30 M733.06,795.30 L740.26,795.30 M744.21,795.30 L751.41,795.30 M755.35,795.30 L762.55,795.30 M766.50,795.30 L771.50,795.30 M771.50,795.30 L771.50,800.30 M771.50,805.50 L771.50,812.70 M771.50,817.90 L771.50,825.10 M771.50,830.30 L771.50,835.30 M601.50,835.30 L606.50,835.30 M610.45,835.30 L617.65,835.30 M621.59,835.30 L628.79,835.30 M632.74,835.30 L639.94,835.30 M643.89,835.30 L651.09,835.30 M655.03,835.30 L662.23,835.30 M666.18,835.30 L673.38,835.30 M677.33,835.30 L684.53,835.30 M688.47,835.30 L695.67,835.30 M699.62,835.30 L706.82,835.30 M710.77,835.30 L717.97,835.30 M721.91,835.30 L729.11,835.30 M733.06,835.30 L740.26,835.30 M744.21,835.30 L751.41,835.30 M755.35,835.30 L762.55,835.30 M766.50,835.30 L771.50,835.30 M601.50,795.30 L601.50,800.30 M601.50,805.50 L601.50,812.70 M601.50,817.90 L601.50,825.10 M601.50,830.30 L601.50,835.30" stroke="#1e1e1e" stroke-width="1.4" fill="none" stroke-linecap="butt"/>
<path d="M734,801 V798.5 H758 V801" stroke="#555" stroke-width="1" fill="none"/>
<path d="M611.8,801 L615.3,797 L618.8,801" stroke="#444" stroke-width="1" fill="none"/>
<path d="M611.3,791.5 L614.0999999999999,789 H616.5 L619.3,791.5" stroke="#444" stroke-width="1.1" fill="none"/>
<text x="613.3" y="787" text-anchor="middle" transform="rotate(-90 613.3 787)" font-size="7.1" fill="#3c3c3c">3</text>
<text x="775.5" y="800" font-size="7.1" fill="#3c3c3c">CLOCKSPRING</text>
<rect x="786.5" y="562.5" width="50" height="46" fill="#d9d9fe"/>
<path d="M786.50,562.50 L791.50,562.50 M796.10,562.50 L803.30,562.50 M807.90,562.50 L815.10,562.50 M819.70,562.50 L826.90,562.50 M831.50,562.50 L836.50,562.50 M836.50,562.50 L836.50,567.50 M836.50,571.10 L836.50,578.30 M836.50,581.90 L836.50,589.10 M836.50,592.70 L836.50,599.90 M836.50,603.50 L836.50,608.50 M786.50,608.50 L791.50,608.50 M796.10,608.50 L803.30,608.50 M807.90,608.50 L815.10,608.50 M819.70,608.50 L826.90,608.50 M831.50,608.50 L836.50,608.50 M786.50,562.50 L786.50,567.50 M786.50,571.10 L786.50,578.30 M786.50,581.90 L786.50,589.10 M786.50,592.70 L786.50,599.90 M786.50,603.50 L786.50,608.50" stroke="#1e1e1e" stroke-width="1.4" fill="none" stroke-linecap="butt"/>
<path d="M787,575.5 H792.1 M819.4,575.5 H829.7 V599.3 H787" stroke="#444" stroke-width="1" fill="none"/>
<circle cx="805.3" cy="575.5" r="10.7" fill="none" stroke="#4a4a4a" stroke-width="1"/>
<path d="M798.5999999999999,572.2 L795.3,575.5 L798.5999999999999,578.8 M812.0,572.2 L815.3,575.5 L812.0,578.8" stroke="#555" stroke-width="1" fill="none"/>
<circle cx="795.3" cy="575.5" r="1.1" fill="#333"/>
<circle cx="815.3" cy="575.5" r="1.1" fill="#333"/>
<path d="M798.8,575.5 C799.8,579.1 803.3,579.1 805.0,578.1 C807.1999999999999,576.5 807.0,572.3 805.3,572.3 C803.5999999999999,572.3 803.4,576.5 805.5999999999999,578.1 C807.3,579.1 810.8,579.1 811.8,575.5" stroke="#222" stroke-width="1.1" fill="none"/>
<path d="M797.2,568.2 L792.1,575.5 L797.2,582.8 M813.4,568.2 L819.4,575.5 L813.4,582.8" stroke="#555" stroke-width="1" fill="none"/>
<path d="M790.3,572.3 L787,575.6 L790.3,578.9" stroke="#444" stroke-width="1" fill="none"/>
<path d="M790.3,596 L787,599.3 L790.3,602.6" stroke="#444" stroke-width="1" fill="none"/>
<path d="M784.5,571 Q782,572.5 782,575.6 Q782,578.7 784,580.5" stroke="#444" stroke-width="1.1" fill="none"/>
<path d="M784.5,594.5 Q782,596.2 782,599.3 Q782,602.4 784,604" stroke="#444" stroke-width="1.1" fill="none"/>
<path d="M783.5,581 V594" stroke="#333" stroke-width="1.1" fill="none" stroke-dasharray="3,2"/>
<text x="842" y="566.5" font-size="7.1" fill="#3c3c3c">RADIO</text>
<text x="769" y="572.5" text-anchor="end" font-size="7.1" fill="#3c3c3c">LT BLU/RED</text>
<text x="776" y="572.5" font-size="7.1" fill="#3c3c3c">5</text>
<text x="768" y="596.5" text-anchor="end" font-size="7.1" fill="#3c3c3c">BLK</text>
<text x="776" y="596.5" font-size="7.1" fill="#3c3c3c">7</text>
<text x="762" y="610" font-size="7.1" fill="#3c3c3c">C228</text>
<path d="M762,611.5 H780" stroke="#555" stroke-width="0.7" fill="none"/>
<rect x="0" y="801.5" width="894" height="25" fill="#fff"/>
</svg>
</body></html>
